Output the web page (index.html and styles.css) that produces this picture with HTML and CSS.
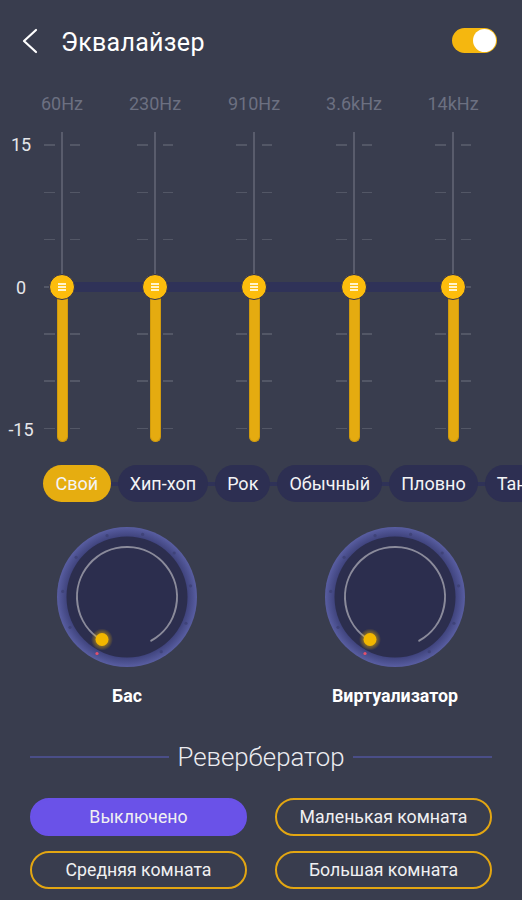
FILE: index.html
```html
<!DOCTYPE html>
<html lang="ru">
<head>
<meta charset="utf-8">
<title>Эквалайзер</title>
<link rel="stylesheet" href="styles.css">
</head>
<body>
<div class="page">
  <header class="header">
    <svg class="back" width="18" height="28" viewBox="0 0 18 28"><polyline points="15,2 3,13 15,24" fill="none" stroke="#ffffff" stroke-width="2.2" stroke-linecap="round" stroke-linejoin="round"/></svg>
    <h1 class="title">Эквалайзер</h1>
    <div class="toggle"><div class="toggle-knob"></div></div>
  </header>

  <div class="freqs bands-grid">
    <div class="freq">60Hz</div>
    <div class="freq">230Hz</div>
    <div class="freq">910Hz</div>
    <div class="freq">3.6kHz</div>
    <div class="freq">14kHz</div>
  </div>

  <section class="eq">
    <div class="axis">
      <span>15</span>
      <span>0</span>
      <span>-15</span>
    </div>
    <div class="bands bands-grid">
      <div class="zero-bar"></div>
      <div class="band"><div class="track"></div><div class="thumb"><i></i><i></i><i></i></div><div class="fill"></div></div>
      <div class="band"><div class="track"></div><div class="thumb"><i></i><i></i><i></i></div><div class="fill"></div></div>
      <div class="band"><div class="track"></div><div class="thumb"><i></i><i></i><i></i></div><div class="fill"></div></div>
      <div class="band"><div class="track"></div><div class="thumb"><i></i><i></i><i></i></div><div class="fill"></div></div>
      <div class="band"><div class="track"></div><div class="thumb"><i></i><i></i><i></i></div><div class="fill"></div></div>
    </div>
  </section>

  <nav class="presets">
    <span class="chip active">Свой</span>
    <span class="chip">Хип-хоп</span>
    <span class="chip">Рок</span>
    <span class="chip">Обычный</span>
    <span class="chip">Пловно</span>
    <span class="chip">Танцевальный</span>
  </nav>

  <section class="knobs">
    <div class="knob">
      <svg width="140" height="140" viewBox="0 0 140 140">
        <defs>
          <radialGradient id="ringA" cx="50%" cy="50%" r="50%"><stop offset="0.86" stop-color="#3f437c"/><stop offset="0.95" stop-color="#4f5494"/><stop offset="1" stop-color="#595ea2"/></radialGradient>
          <radialGradient id="glowA"><stop offset="0.45" stop-color="#f5b800" stop-opacity="0.55"/><stop offset="1" stop-color="#f5b800" stop-opacity="0"/></radialGradient>
        </defs>
        <circle cx="70" cy="70" r="70" fill="url(#ringA)"/>
        <circle cx="70" cy="70" r="60.5" fill="#2c2e4e"/>
        <g fill="#3f4379">
          <circle cx="13.05" cy="100.28" r="1.6"/><circle cx="5.75" cy="64.38" r="1.6"/><circle cx="19.17" cy="30.29" r="1.6"/>
          <circle cx="50.07" cy="8.66" r="1.6"/><circle cx="85.6" cy="7.42" r="1.6"/><circle cx="117.17" cy="26.01" r="1.6"/>
          <circle cx="133.52" cy="58.8" r="1.6"/><circle cx="128.93" cy="96.24" r="1.6"/><circle cx="104.18" cy="124.7" r="1.6"/>
        </g>
        <path d="M44.25 112.86 A50 50 0 1 1 94.24 113.73" fill="none" stroke="#8b8b9b" stroke-width="2" stroke-linecap="round"/>
        <circle cx="45" cy="112.5" r="11" fill="url(#glowA)"/>
        <circle cx="45" cy="112.5" r="6.5" fill="#f2b600"/>
        <circle cx="40" cy="126.5" r="1.6" fill="#e4506c"/>
      </svg>
      <div class="knob-label">Бас</div>
    </div>
    <div class="knob">
      <svg width="140" height="140" viewBox="0 0 140 140">
        <defs>
          <radialGradient id="ringB" cx="50%" cy="50%" r="50%"><stop offset="0.86" stop-color="#3f437c"/><stop offset="0.95" stop-color="#4f5494"/><stop offset="1" stop-color="#595ea2"/></radialGradient>
          <radialGradient id="glowB"><stop offset="0.45" stop-color="#f5b800" stop-opacity="0.55"/><stop offset="1" stop-color="#f5b800" stop-opacity="0"/></radialGradient>
        </defs>
        <circle cx="70" cy="70" r="70" fill="url(#ringB)"/>
        <circle cx="70" cy="70" r="60.5" fill="#2c2e4e"/>
        <g fill="#3f4379">
          <circle cx="13.05" cy="100.28" r="1.6"/><circle cx="5.75" cy="64.38" r="1.6"/><circle cx="19.17" cy="30.29" r="1.6"/>
          <circle cx="50.07" cy="8.66" r="1.6"/><circle cx="85.6" cy="7.42" r="1.6"/><circle cx="117.17" cy="26.01" r="1.6"/>
          <circle cx="133.52" cy="58.8" r="1.6"/><circle cx="128.93" cy="96.24" r="1.6"/><circle cx="104.18" cy="124.7" r="1.6"/>
        </g>
        <path d="M44.25 112.86 A50 50 0 1 1 94.24 113.73" fill="none" stroke="#8b8b9b" stroke-width="2" stroke-linecap="round"/>
        <circle cx="45" cy="112.5" r="11" fill="url(#glowB)"/>
        <circle cx="45" cy="112.5" r="6.5" fill="#f2b600"/>
        <circle cx="40" cy="126.5" r="1.6" fill="#e4506c"/>
      </svg>
      <div class="knob-label">Виртуализатор</div>
    </div>
  </section>

  <div class="reverb-title">
    <span class="rule"></span>
    <h2>Ревербератор</h2>
    <span class="rule"></span>
  </div>

  <div class="reverb-buttons">
    <button class="rbtn selected">Выключено</button>
    <button class="rbtn">Маленькая комната</button>
    <button class="rbtn">Средняя комната</button>
    <button class="rbtn">Большая комната</button>
  </div>
</div>
</body>
</html>
```

FILE: styles.css
```css
* { box-sizing: border-box; }

html, body {
  margin: 0;
  padding: 0;
  background: #393d4e;
}

body {
  font-family: Roboto, "Noto Sans", sans-serif;
  color: #f2f2f4;
}

.page {
  width: 522px;
  height: 900px;
  overflow: hidden;
  background: #393d4e;
}

/* Header */
.header {
  height: 84px;
  display: flex;
  align-items: center;
  padding: 0 25px 0 21px;
}

.back {
  display: block;
}

.title {
  margin: 0 0 0 22px;
  font-size: 25px;
  font-weight: 400;
  color: #ffffff;
  flex: 1;
  letter-spacing: 0.3px;
}

.toggle {
  width: 45px;
  height: 25px;
  border-radius: 13px;
  background: #f5b70f;
  display: flex;
  justify-content: flex-end;
  align-items: center;
  padding: 1px;
  margin-top: -3px;
}

.toggle-knob {
  width: 23px;
  height: 23px;
  border-radius: 50%;
  background: #ffffff;
}

/* Bands shared grid */
.bands-grid {
  display: grid;
  grid-template-columns: 93px 99px 100px 99px 36px;
}

.freqs {
  margin: 10px 0 0 44px;
  height: 20px;
}

.freq {
  width: 36px;
  display: flex;
  justify-content: center;
  white-space: nowrap;
  font-size: 18px;
  line-height: 20px;
  color: #6c7081;
}

/* Equalizer */
.eq {
  margin-top: 18px;
  height: 310px;
  display: grid;
  grid-template-columns: 44px 1fr;
}

.axis {
  display: flex;
  flex-direction: column;
  align-items: center;
  justify-content: space-between;
  padding: 3px 2px 2px 0;
  font-size: 18px;
  line-height: 20px;
  color: #e6e6ea;
}

.bands {
  position: relative;
  height: 310px;
}

.zero-bar {
  position: absolute;
  left: 18px;
  width: 391px;
  top: 150px;
  height: 10px;
  background: #2f3258;
  z-index: 2;
}

.band {
  position: relative;
  width: 36px;
  height: 310px;
  display: flex;
  flex-direction: column;
  align-items: center;
}

.band::before {
  content: "";
  position: absolute;
  inset: 0;
  background: repeating-linear-gradient(to bottom,
    transparent 0, transparent 12.5px,
    #535766 12.5px, #535766 14px,
    transparent 14px, transparent 47.2px);
  -webkit-mask-image: linear-gradient(to right, #000 0, #000 11px, transparent 11px, transparent 26px, #000 26px, #000 36px);
  mask-image: linear-gradient(to right, #000 0, #000 11px, transparent 11px, transparent 26px, #000 26px, #000 36px);
  z-index: 0;
}

.track {
  position: relative;
  z-index: 1;
  width: 2px;
  height: 142px;
  background: #595c6c;
}

.thumb {
  position: relative;
  z-index: 3;
  width: 26px;
  height: 26px;
  border-radius: 50%;
  background: #fdbd0c;
  border: 1.5px solid #2d3050;
  display: flex;
  flex-direction: column;
  align-items: center;
  justify-content: center;
  gap: 1px;
  flex: none;
}

.thumb i {
  display: block;
  width: 8px;
  height: 2px;
  background: #fff3cc;
}

.fill {
  position: relative;
  z-index: 1;
  width: 11px;
  flex: 1;
  margin-top: -8px;
  background: #e5ab10;
  border: 1px solid #cf9a0e;
  border-top: none;
  border-radius: 0 0 6px 6px;
}

/* Presets */
.presets {
  margin-top: 23px;
  height: 37px;
  display: flex;
  gap: 7px;
  padding-left: 43px;
  overflow: hidden;
  white-space: nowrap;
  background-image: linear-gradient(#2f3258, #2f3258);
  background-repeat: no-repeat;
  background-size: 100% 4px;
  background-position: 0 center;
  background-origin: content-box;
}

.chip {
  flex: none;
  height: 37px;
  line-height: 37px;
  padding: 0 12px;
  border-radius: 19px;
  background: #2d2f52;
  font-size: 18px;
  color: #f4f4f6;
}

.chip.active {
  background: #e6ad10;
  padding: 0 12.5px;
}

/* Knobs */
.knobs {
  margin-top: 25px;
  display: flex;
  gap: 128px;
  padding-left: 57px;
}

.knob {
  width: 140px;
  display: flex;
  flex-direction: column;
  align-items: center;
}

.knob svg {
  display: block;
}

.knob-label {
  margin-top: 19px;
  font-size: 17.8px;
  font-weight: 700;
  line-height: 20px;
  white-space: nowrap;
  color: #ffffff;
}

/* Reverb */
.reverb-title {
  margin-top: 36px;
  height: 30px;
  display: flex;
  align-items: center;
  gap: 8px;
  padding: 0 30px;
}

.rule {
  flex: 1;
  height: 2px;
  background: #4a4e88;
}

.reverb-title h2 {
  margin: 0;
  font-size: 25.8px;
  font-weight: 300;
  line-height: 30px;
  color: #ececf0;
}

.reverb-buttons {
  margin-top: 26px;
  display: grid;
  grid-template-columns: 1fr 1fr;
  column-gap: 28px;
  row-gap: 15px;
  padding: 0 30px;
}

.rbtn {
  height: 38px;
  border-radius: 19px;
  border: 2px solid #e3a612;
  background: transparent;
  font-family: Roboto, "Noto Sans", sans-serif;
  font-size: 17.7px;
  color: #f0f0f2;
  padding: 0;
}

.rbtn.selected {
  background: #6a52e8;
  border-color: #6a52e8;
}
```
